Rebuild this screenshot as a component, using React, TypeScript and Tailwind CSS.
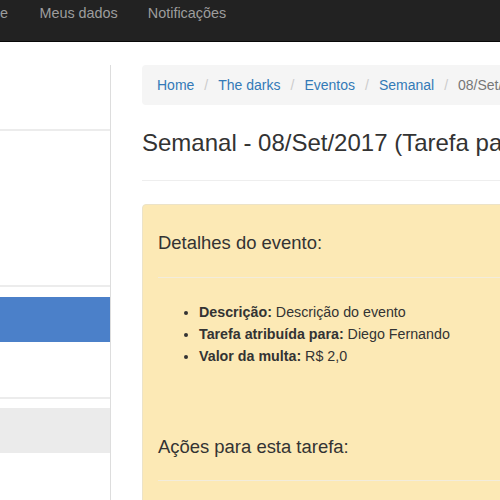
import React from "react";

export default function App() {
  const font = { fontFamily: '"Liberation Sans", Arial, sans-serif' };
  return (
    <div className="w-[500px] h-[500px] overflow-hidden bg-white text-[#333]" style={font}>
      <div className="h-[42px] bg-[#222] border-b border-[#080808] flex items-start pt-[3px] text-[14.4px] leading-[20px] text-[#9d9d9d] whitespace-nowrap">
        <span className="-ml-[30.5px] pr-[16.5px]">Home</span>
        <span className="px-[15px]">Meus dados</span>
        <span className="px-[15px]">Notificações</span>
      </div>
      <div className="flex items-start">
        <div className="w-[111px] shrink-0 mt-[23px] h-[435px] border-r border-[#dddddd] flex flex-col">
          <div className="h-[64px]" />
          <div className="h-[2px] bg-[#ececec]" />
          <div className="h-[154px]" />
          <div className="h-[2px] bg-[#ececec]" />
          <div className="h-[10px]" />
          <div className="h-[45px] bg-[#4b80c9]" />
          <div className="h-[55px]" />
          <div className="h-[2px] bg-[#ececec]" />
          <div className="h-[9px]" />
          <div className="h-[45px] bg-[#ebebeb]" />
        </div>
        <div className="ml-[31px] w-[700px] shrink-0 mt-[23px]">
          <div className="h-[40px] bg-[#f5f5f5] rounded px-[15px] flex items-center text-[14px] leading-[20px] whitespace-nowrap">
            <span className="text-[#337ab7]">Home</span>
            <span className="text-[#ccc] mx-[10px]">/</span>
            <span className="text-[#337ab7]">The darks</span>
            <span className="text-[#ccc] mx-[10px]">/</span>
            <span className="text-[#337ab7]">Eventos</span>
            <span className="text-[#ccc] mx-[10px]">/</span>
            <span className="text-[#337ab7]">Semanal</span>
            <span className="text-[#ccc] mx-[10px]">/</span>
            <span className="text-[#777]">08/Set/2017 (Tarefa para Diego Fernando)</span>
          </div>
          <h3 className="mt-[25px] text-[24px] leading-[26px] h-[26px] whitespace-nowrap text-[#333]">
            Semanal - 08/Set/2017 (Tarefa para Diego Fernando)
          </h3>
          <div className="mt-[24px] border-t border-[#eeeeee]" />
          <div className="mt-[23px] h-[400px] bg-[#fce9b5] border border-[#ece3c8] rounded px-[15px] pt-[28px]">
            <h4 className="text-[18.45px] leading-[20px] text-[#333]">Detalhes do evento:</h4>
            <div className="mt-[24px] border-t border-[#f2ecdc]" />
            <ul className="mt-[23px] list-disc pl-[41px] text-[14.25px] leading-[22px] text-[#333]">
              <li><b>Descrição:</b> Descrição do evento</li>
              <li><b>Tarefa atribuída para:</b> Diego Fernando</li>
              <li><b>Valor da multa:</b> R$ 2,0</li>
            </ul>
            <h4 className="mt-[70px] text-[18.45px] leading-[20px] text-[#333]">Ações para esta tarefa:</h4>
            <div className="mt-[23px] border-t border-[#f2ecdc]" />
          </div>
        </div>
      </div>
    </div>
  );
}
